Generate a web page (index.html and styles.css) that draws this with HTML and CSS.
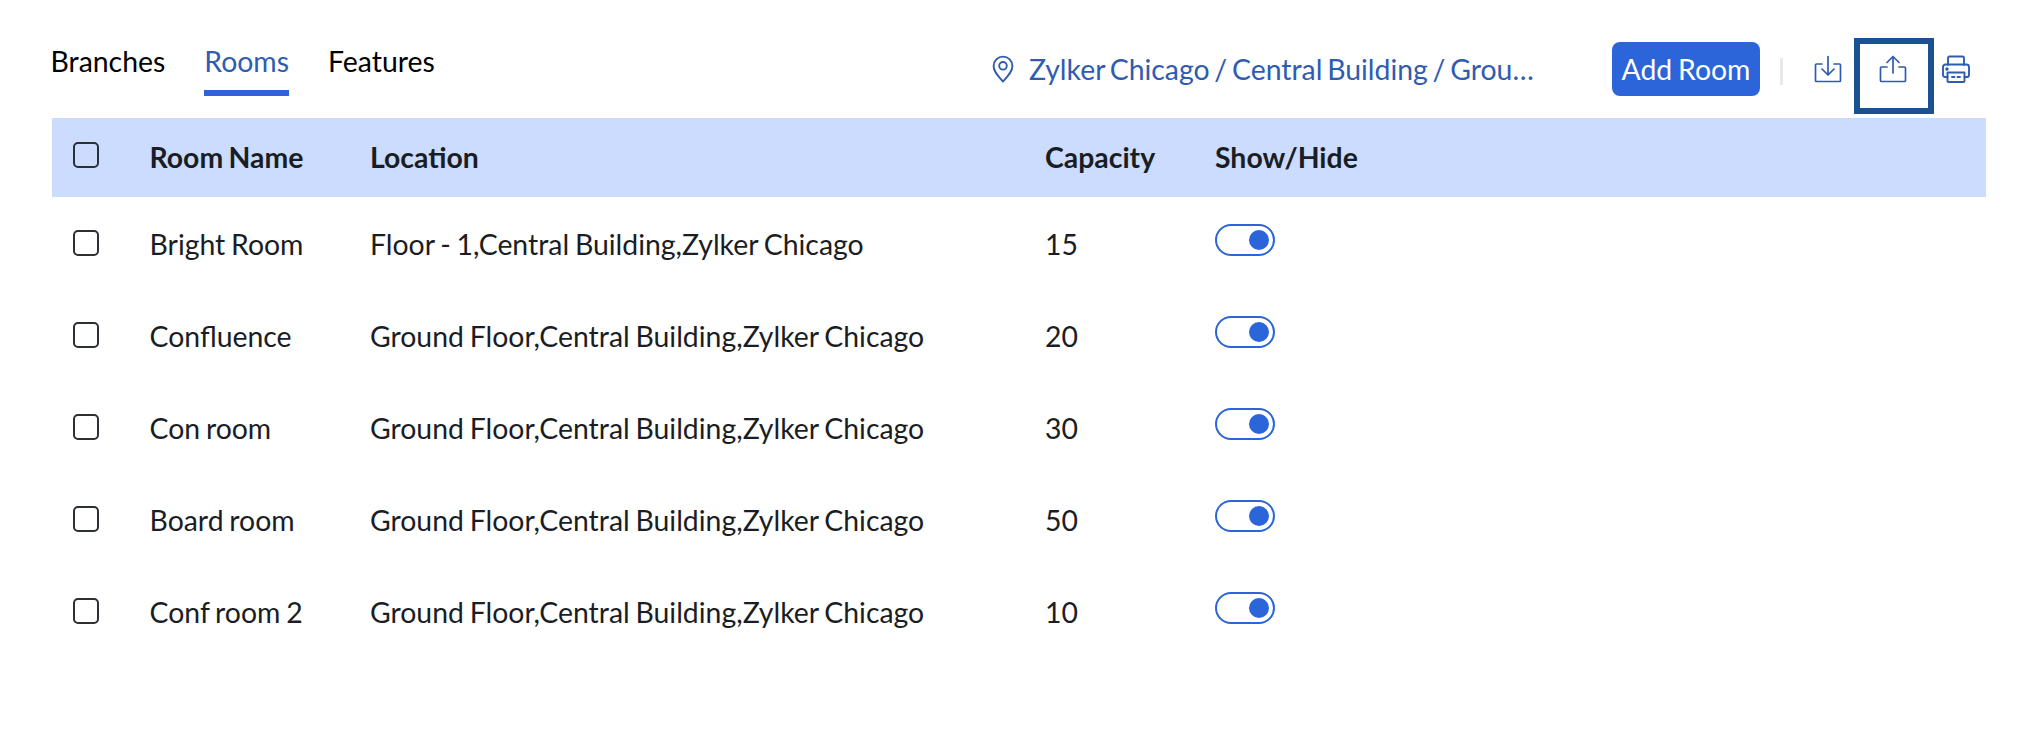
FILE: index.html
```html
<!DOCTYPE html>
<html lang="en">
<head>
<meta charset="utf-8">
<title>Rooms</title>
<link rel="stylesheet" href="styles.css">
</head>
<body>
<div class="page">
  <header class="topbar">
    <nav class="tabs">
      <a class="tab">Branches</a>
      <a class="tab active">Rooms</a>
      <a class="tab">Features</a>
    </nav>
    <div class="location">
      <svg class="pin" viewBox="0 0 22 28" fill="none" stroke="#2f5cb0" stroke-width="1.9"><path d="M11 26.5C6 21 1.6 16.6 1.6 11a9.4 9.4 0 0 1 18.8 0c0 5.600-4.400 10-9.400 15.500z" stroke-linejoin="round"/><circle cx="11" cy="10.800" r="3.800"/></svg>
      <span class="path">Zylker Chicago / Central Building / Ground Floor</span>
    </div>
    <button class="add">Add Room</button>
    <span class="sep"></span>
    <span class="icon-btn dl">
      <svg viewBox="0 0 28 28" fill="none" stroke="#2f5cb0" stroke-width="1.700" stroke-linecap="round" stroke-linejoin="round"><path d="M8 9H2.500a1 1 0 0 0-1 1v15.500a1 1 0 0 0 1 1h23a1 1 0 0 0 1-1V10a1 1 0 0 0-1-1H20"/><path d="M14 1.500V20M8 14l6 6 6-6"/></svg>
    </span>
    <span class="icon-btn focus">
      <svg viewBox="0 0 28 28" fill="none" stroke="#2f5cb0" stroke-width="1.700" stroke-linecap="round" stroke-linejoin="round"><path d="M8 12H2.500a1 1 0 0 0-1 1v12.500a1 1 0 0 0 1 1h23a1 1 0 0 0 1-1V13a1 1 0 0 0-1-1H20"/><path d="M14 18V1.500M8 7.500l6-6 6 6"/></svg>
    </span>
    <span class="icon-btn print">
      <svg viewBox="0 0 28 28" fill="none" stroke="#2f5cb0" stroke-width="1.900" stroke-linecap="round" stroke-linejoin="round"><path d="M6 10V3a1.500 1.500 0 0 1 1.500-1.500h13A1.500 1.500 0 0 1 22 3v7"/><path d="M5.500 22H3a2 2 0 0 1-2-2v-8a2.500 2.500 0 0 1 2.500-2.500h21A2.500 2.500 0 0 1 27 12v8a2 2 0 0 1-2 2h-2.500"/><path d="M5.500 17.500h17V26a1 1 0 0 1-1 1h-15a1 1 0 0 1-1-1z"/><path d="M10 22h2.500M15.500 22H18"/><circle cx="5" cy="14" r=".8" fill="#2f5cb0"/></svg>
    </span>
  </header>

  <section class="table">
    <div class="row head">
      <span class="check"></span><span>Room Name</span><span>Location</span><span>Capacity</span><span>Show/Hide</span>
    </div>
    <div class="row first">
      <span class="check"></span><span>Bright Room</span><span>Floor - 1,Central Building,Zylker Chicago</span><span>15</span><span class="toggle"></span>
    </div>
    <div class="row">
      <span class="check"></span><span>Confluence</span><span>Ground Floor,Central Building,Zylker Chicago</span><span>20</span><span class="toggle"></span>
    </div>
    <div class="row">
      <span class="check"></span><span>Con room</span><span>Ground Floor,Central Building,Zylker Chicago</span><span>30</span><span class="toggle"></span>
    </div>
    <div class="row">
      <span class="check"></span><span>Board room</span><span>Ground Floor,Central Building,Zylker Chicago</span><span>50</span><span class="toggle"></span>
    </div>
    <div class="row">
      <span class="check"></span><span>Conf room 2</span><span>Ground Floor,Central Building,Zylker Chicago</span><span>10</span><span class="toggle"></span>
    </div>
  </section>
</div>
</body>
</html>
```
FILE: styles.css
```css
* { box-sizing: border-box; }
html, body { margin: 0; background: #fff; }
body {
  font-family: Lato, "Liberation Sans", sans-serif;
  font-size: 28.4px;
  word-spacing: -1.5px;
  color: #1a1d24;
  height: 736px;
  overflow: hidden;
}
.page { width: 1986px; padding-left: 52px; }

.topbar {
  height: 118px;
  display: flex;
  align-items: flex-start;
  padding-right: 16px;
}
.tabs { display: flex; gap: 39px; margin-left: -1.5px; }
.tab {
  color: #000;
  height: 96px;
  padding-top: 43px;
  line-height: 36px;
  display: block;
}
.tab.active { color: #2f5cb0; border-bottom: 6px solid #2b65d9; }
.location {
  display: flex;
  align-items: center;
  gap: 15px;
  color: #2f5cb0;
  margin: 51px 0 0 auto;
  height: 36px;
  word-spacing: -2.5px;
}
.pin { width: 22px; height: 28px; flex: none; }
.path {
  width: 509px;
  white-space: nowrap;
  overflow: hidden;
  text-overflow: ellipsis;
}
.add {
  font: inherit;
  word-spacing: -1.5px;
  color: #fff;
  background: #2b65d9;
  border: 0;
  border-radius: 8px;
  width: 148px;
  height: 54px;
  padding: 0;
  margin: 42px 0 0 74px;
}
.sep { width: 3px; height: 27px; background: #e6e8ec; margin: 58px 0 0 20px; }
.icon-btn { display: flex; align-items: center; justify-content: center; }
.icon-btn svg { width: 28px; height: 28px; }
.dl { margin: 55px 0 0 31px; height: 28px; }
.focus {
  width: 80px;
  height: 76px;
  border: 6px solid #1a5192;
  margin: 38px 0 0 12px;
  padding: 0 3px 14px 0;
}
.print { margin: 55px 0 0 8px; height: 28px; }

.table { width: 1934px; }
.row {
  display: grid;
  grid-template-columns: 97.5px 220.5px 675px 170px 1fr;
  align-items: center;
  height: 92px;
  padding-bottom: 2px;
  line-height: 34px;
}
.row.head {
  height: 79px;
  background: #ccdcff;
  font-weight: 700;
}
.row.first { margin-top: 2px; }
.check {
  width: 26px;
  height: 26px;
  margin: -3px 0 0 21px;
  border: 2px solid #2b2f36;
  border-radius: 5px;
}
.toggle {
  width: 60px;
  height: 32px;
  margin-top: -9px;
  border: 2px solid #2b65d9;
  border-radius: 16px;
  display: flex;
  align-items: center;
  justify-content: flex-end;
  padding-right: 4px;
}
.toggle::after {
  content: "";
  width: 20px;
  height: 20px;
  border-radius: 50%;
  background: #2b65d9;
}
```
